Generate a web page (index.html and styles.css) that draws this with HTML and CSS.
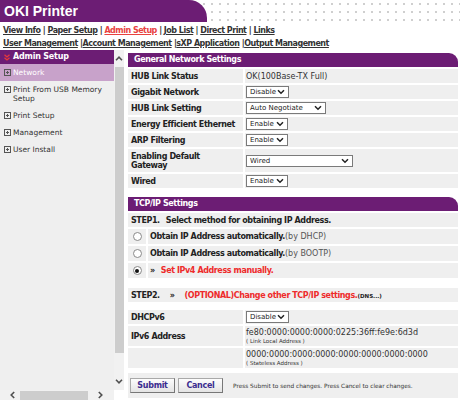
FILE: index.html
```html
<!DOCTYPE html>
<html lang="en">
<head>
  <meta charset="UTF-8" />
  <title>OKI Printer - Network</title>
  <link rel="stylesheet" href="styles.css">
</head>
<body>
  <div class="header">
    <div class="brand">OKI Printer</div>
  </div>

  <div class="nav">
    <div class="nav-line">
      <a href="#">View Info</a> | <a href="#">Paper Setup</a> | <a href="#" class="current">Admin Setup</a> | <a href="#">Job List</a> | <a href="#">Direct Print</a> | <a href="#">Links</a>
    </div>
    <div class="nav-line">
      <a href="#">User Management</a> |<a href="#">Account Management</a> |<a href="#">sXP Application</a> |<a href="#">Output Management</a>
    </div>
  </div>

  <div class="main">
    <div class="sidebar">
      <div class="side-body">
        <div class="side-title">
          <svg class="side-arrow" width="6" height="7" viewBox="0 0 6 7"><polyline points="0.5,0.8 3,3 5.5,0.8" fill="none" stroke="#e8383a" stroke-width="1.3"/><polyline points="0.5,3.8 3,6 5.5,3.8" fill="none" stroke="#e8383a" stroke-width="1.3"/></svg>
          Admin Setup
        </div>
        <div class="side-item active"><svg class="plus" width="7" height="7" viewBox="0 0 7 7"><rect x="0.5" y="0.5" width="6" height="6" fill="none" stroke="#555"/><path d="M2 3.5h3M3.5 2v3" stroke="#555"/></svg><span>Network</span></div>
        <div class="side-item"><svg class="plus" width="7" height="7" viewBox="0 0 7 7"><rect x="0.5" y="0.5" width="6" height="6" fill="none" stroke="#555"/><path d="M2 3.5h3M3.5 2v3" stroke="#555"/></svg><span>Print From USB Memory Setup</span></div>
        <div class="side-item"><svg class="plus" width="7" height="7" viewBox="0 0 7 7"><rect x="0.5" y="0.5" width="6" height="6" fill="none" stroke="#555"/><path d="M2 3.5h3M3.5 2v3" stroke="#555"/></svg><span>Print Setup</span></div>
        <div class="side-item"><svg class="plus" width="7" height="7" viewBox="0 0 7 7"><rect x="0.5" y="0.5" width="6" height="6" fill="none" stroke="#555"/><path d="M2 3.5h3M3.5 2v3" stroke="#555"/></svg><span>Management</span></div>
        <div class="side-item"><svg class="plus" width="7" height="7" viewBox="0 0 7 7"><rect x="0.5" y="0.5" width="6" height="6" fill="none" stroke="#555"/><path d="M2 3.5h3M3.5 2v3" stroke="#555"/></svg><span>User Install</span></div>
      </div>
      <div class="vscroll">
        <div class="sb-btn"><svg width="8" height="5" viewBox="0 0 8 5"><polyline points="1,4.2 4,1.2 7,4.2" fill="none" stroke="#505050" stroke-width="1.6"/></svg></div>
        <div class="vthumb"></div>
        <div class="sb-space"></div>
        <div class="sb-btn"><svg width="8" height="5" viewBox="0 0 8 5"><polyline points="1,0.8 4,3.8 7,0.8" fill="none" stroke="#505050" stroke-width="1.6"/></svg></div>
      </div>
      <div class="hscroll">
        <svg width="5" height="8" viewBox="0 0 5 8"><polyline points="4.2,1 1.2,4 4.2,7" fill="none" stroke="#505050" stroke-width="1.6"/></svg>
        <div class="hthumb"></div>
        <svg width="5" height="8" viewBox="0 0 5 8"><polyline points="0.8,1 3.8,4 0.8,7" fill="none" stroke="#505050" stroke-width="1.6"/></svg>
      </div>
      <div class="corner"></div>
    </div>

    <div class="content">
      <div class="section-title">General Network Settings</div>
      <div class="form-grid">
        <div class="label">HUB Link Status</div>
        <div class="value">OK(100Base-TX Full)</div>

        <div class="label">Gigabit Network</div>
        <div class="value"><span class="select w-disable">Disable<svg width="8" height="6" viewBox="0 0 8 6"><polyline points="1,1.3 4,4.3 7,1.3" fill="none" stroke="#222" stroke-width="1.5"/></svg></span></div>

        <div class="label">HUB Link Setting</div>
        <div class="value"><span class="select w-auto">Auto Negotiate<svg width="8" height="6" viewBox="0 0 8 6"><polyline points="1,1.3 4,4.3 7,1.3" fill="none" stroke="#222" stroke-width="1.5"/></svg></span></div>

        <div class="label">Energy Efficient Ethernet</div>
        <div class="value"><span class="select w-enable">Enable<svg width="8" height="6" viewBox="0 0 8 6"><polyline points="1,1.3 4,4.3 7,1.3" fill="none" stroke="#222" stroke-width="1.5"/></svg></span></div>

        <div class="label">ARP Filtering</div>
        <div class="value"><span class="select w-enable">Enable<svg width="8" height="6" viewBox="0 0 8 6"><polyline points="1,1.3 4,4.3 7,1.3" fill="none" stroke="#222" stroke-width="1.5"/></svg></span></div>

        <div class="label tall">Enabling Default<br>Gateway</div>
        <div class="value"><span class="select w-wired">Wired<svg width="8" height="6" viewBox="0 0 8 6"><polyline points="1,1.3 4,4.3 7,1.3" fill="none" stroke="#222" stroke-width="1.5"/></svg></span></div>

        <div class="label">Wired</div>
        <div class="value"><span class="select w-enable">Enable<svg width="8" height="6" viewBox="0 0 8 6"><polyline points="1,1.3 4,4.3 7,1.3" fill="none" stroke="#222" stroke-width="1.5"/></svg></span></div>
      </div>

      <div class="section-title tcp">TCP/IP Settings</div>
      <div class="steps">
        <div class="step-row"><b>STEP1.</b><b class="gap">Select method for obtaining IP Address.</b></div>
        <div class="radio-row">
          <div class="radio-cell"><span class="radio"></span></div>
          <div class="radio-text"><b>Obtain IP Address automatically.</b><span class="muted">(by DHCP)</span></div>
        </div>
        <div class="radio-row">
          <div class="radio-cell"><span class="radio"></span></div>
          <div class="radio-text"><b>Obtain IP Address automatically.</b><span class="muted">(by BOOTP)</span></div>
        </div>
        <div class="radio-row">
          <div class="radio-cell"><span class="radio checked"></span></div>
          <div class="radio-text"><b>&raquo;</b><b class="red gap">Set IPv4 Address manually.</b></div>
        </div>
      </div>

      <div class="step-row step2"><b>STEP2.</b><b class="raquo">&raquo;</b><b class="red">(OPTIONAL)Change other TCP/IP settings.</b><b class="tiny">(DNS...)</b></div>

      <div class="form-grid ipv6">
        <div class="label">DHCPv6</div>
        <div class="value"><span class="select w-disable">Disable<svg width="8" height="6" viewBox="0 0 8 6"><polyline points="1,1.3 4,4.3 7,1.3" fill="none" stroke="#222" stroke-width="1.5"/></svg></span></div>

        <div class="label addr">IPv6 Address</div>
        <div class="value addr">fe80:0000:0000:0000:0225:36ff:fe9e:6d3d<small>( Link Local Address )</small></div>

        <div class="label addr"></div>
        <div class="value addr">0000:0000:0000:0000:0000:0000:0000:0000<small>( Stateless Address )</small></div>
      </div>

      <div class="actions">
        <button class="btn">Submit</button>
        <button class="btn">Cancel</button>
        <span class="hint">Press Submit to send changes. Press Cancel to clear changes.</span>
      </div>
    </div>
  </div>
</body>
</html>
```

FILE: styles.css
```css
body {
  margin: 0;
  font-family: "DejaVu Sans", Verdana, sans-serif;
  font-size: 8px;
  color: #333;
  background: #fff;
  overflow: hidden;
}
b {
  letter-spacing: -0.4px;
}
.header {
  height: 22px;
  background-color: #fff;
  background-image: radial-gradient(circle, #cfcfcf 0.9px, transparent 1.3px);
  background-size: 8px 8px;
  background-position: 0 0;
}
.brand {
  width: 203px;
  height: 22px;
  padding-left: 4px;
  background: #6c1d74;
  border-top-right-radius: 18px;
  color: #fff;
  font: bold 14px/23px "Liberation Sans", Arial, sans-serif;
}
.nav {
  padding: 2px 3px 2px;
  height: 24px;
}
.nav-line {
  line-height: 13px;
  font-weight: bold;
  letter-spacing: -0.5px;
  color: #333;
  white-space: nowrap;
}
.nav a {
  color: #333;
  text-decoration: underline;
}
.nav a.current {
  color: #e8423f;
}
.main {
  display: flex;
}
.sidebar {
  width: 124px;
  height: 350px;
  display: grid;
  grid-template-columns: 114px 10px;
  grid-template-rows: 340px 10px;
}
.side-body {
  background: #efefef;
}
.side-title {
  height: 14px;
  background: #6c1d74;
  color: #fff;
  font-weight: bold;
  letter-spacing: -0.2px;
  line-height: 14px;
  display: flex;
  align-items: center;
  gap: 3px;
  padding-left: 4px;
}
.side-item {
  display: flex;
  align-items: flex-start;
  gap: 2px;
  padding: 4px;
  line-height: 9px;
  font-size: 7.5px;
  color: #333;
}
.side-item .plus {
  flex: none;
  margin-top: 1px;
}
.side-item.active {
  background: #c8a2ca;
  color: #fff;
}
.vscroll {
  background: #f1f1f1;
  display: flex;
  flex-direction: column;
}
.sb-btn {
  height: 17px;
  display: flex;
  align-items: center;
  justify-content: center;
}
.vthumb {
  height: 286px;
  margin-left: 1px;
  background: #cdcdcd;
}
.sb-space {
  flex: 1;
}
.hscroll {
  background: #f1f1f1;
  display: flex;
  align-items: center;
  padding-left: 10px;
  gap: 5px;
}
.hthumb {
  width: 68px;
  height: 9px;
  background: #cdcdcd;
  margin-right: 5px;
}
.corner {
  background: #fff;
}
.content {
  width: 330px;
  margin-left: 4px;
  padding-top: 3px;
}
.section-title {
  height: 14px;
  line-height: 14px;
  background: #6c1d74;
  border-top-right-radius: 9px;
  color: #fff;
  font-weight: bold;
  letter-spacing: -0.4px;
  padding-left: 6px;
}
.section-title.tcp {
  margin-top: 9px;
}
.form-grid {
  display: grid;
  grid-template-columns: 115px 1fr;
  gap: 2px;
  margin-top: 2px;
}
.label, .value {
  background: #efefef;
  min-height: 14px;
  display: flex;
  align-items: center;
}
.label {
  font-weight: bold;
  letter-spacing: -0.4px;
  padding-left: 3px;
  color: #222;
}
.label.tall {
  display: block;
  min-height: 23px;
  box-sizing: border-box;
  padding-top: 2.5px;
  line-height: 9px;
}
.value {
  padding-left: 1px;
}
.select {
  box-sizing: border-box;
  height: 12px;
  display: inline-flex;
  align-items: center;
  justify-content: space-between;
  padding: 0 3px 0 3px;
  border: 1px solid #7a7a7a;
  background: #fff;
  color: #222;
  font-size: 7px;
}
.w-disable { width: 43px; }
.w-auto { width: 80px; }
.w-enable { width: 42px; }
.w-wired { width: 107px; }
.steps {
  display: flex;
  flex-direction: column;
  gap: 2px;
  margin-top: 2px;
}
.step-row {
  background: #efefef;
  height: 14px;
  display: flex;
  align-items: center;
  padding-left: 3px;
  color: #222;
}
.gap {
  margin-left: 6px;
}
.radio-row {
  display: flex;
  gap: 2px;
  height: 15px;
}
.radio-cell {
  width: 18px;
  background: #efefef;
  display: flex;
  align-items: center;
  justify-content: center;
}
.radio {
  box-sizing: border-box;
  width: 9px;
  height: 9px;
  border: 1px solid #8a8a8a;
  border-radius: 50%;
  background: #fff;
  display: flex;
  align-items: center;
  justify-content: center;
}
.radio.checked::after {
  content: "";
  width: 4px;
  height: 4px;
  border-radius: 50%;
  background: #111;
}
.radio-text {
  flex: 1;
  background: #efefef;
  display: flex;
  align-items: center;
  padding-left: 2px;
  color: #222;
}
.muted {
  font-weight: normal;
  color: #555;
}
.red {
  color: #ee2b2b;
}
.step2 {
  margin-top: 10px;
}
.raquo {
  margin: 0 10px;
}
.tiny {
  font-size: 5.5px;
  letter-spacing: 0;
  margin-top: 1px;
}
.ipv6 {
  margin-top: 8px;
}
.label.addr, .value.addr {
  min-height: 20px;
}
.value.addr {
  flex-direction: column;
  align-items: flex-start;
  justify-content: center;
  line-height: 10px;
}
.value.addr small {
  font-size: 5.5px;
  line-height: 7px;
}
.actions {
  margin-top: 5px;
  background: #efefef;
  display: flex;
  align-items: center;
  gap: 3px;
  padding: 5px 2px;
}
.btn {
  height: 15px;
  width: 45px;
  padding: 0;
  font-family: "DejaVu Sans", Verdana, sans-serif;
  font-size: 8px;
  font-weight: bold;
  letter-spacing: -0.3px;
  color: #3b2c8f;
  background: linear-gradient(#fdfdfd, #e4e4e4);
  border: 1px solid #a9a9a9;
  border-right-color: #777;
  border-bottom-color: #777;
}
.hint {
  margin-left: 7px;
  font-size: 5.8px;
  color: #333;
}
```
